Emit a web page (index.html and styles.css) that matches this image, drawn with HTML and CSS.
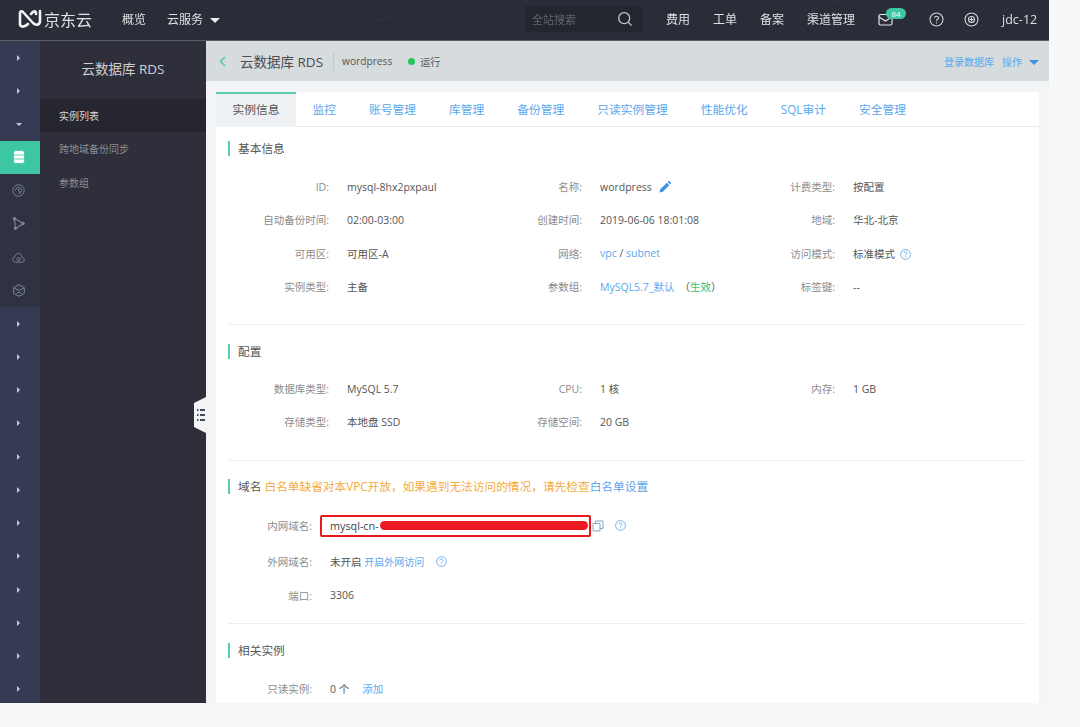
FILE: index.html
```html
<!DOCTYPE html>
<html lang="zh-CN">
<head>
    <meta name="viewport" content="width=device-width, initial-scale=1.0" />
    <title>云数据库 RDS</title>
    <link rel="stylesheet" href="styles.css">
</head>
<body>
    <div class="app">
        <!-- top bar -->
        <header class="topbar">
            <svg class="topbar-lines" width="1049" height="40" viewBox="0 0 1049 40" fill="none" stroke="#3a3c4a" stroke-width="1">
                <path d="M40 40C70 20 90 10 110 0" />
                <path d="M100 40C120 30 130 15 128 0" />
                <path d="M270 40C300 25 320 10 345 0" />
                <path d="M330 40C345 20 400 25 410 0" />
                <path d="M440 0C470 15 480 30 500 40" />
                <path d="M640 40C660 25 680 15 705 0" />
                <path d="M760 40C790 25 810 10 840 0" />
                <path d="M860 0C880 10 885 30 900 40" />
                <path d="M960 40C980 25 1000 15 1020 0" />
            </svg>
            <a class="logo">
                <svg width="25" height="20" viewBox="0 0 25 20" fill="none" stroke="#f2f2f2" stroke-width="2.6" stroke-linejoin="round" stroke-linecap="round">
                    <path d="M2 15V4C2 2 4 2 5 3L15 14C18 17 22 16 22 12V2" />
                    <path d="M2 15C2 19 7 18 10 15" />
                    <path d="M13 5C15 2 18 1 18 5" />
                </svg>
                <span>京东云</span>
            </a>
            <nav class="topnav">
                <a>概览</a>
                <a>云服务<i class="caret caret-white"></i></a>
            </nav>
            <div class="search">
                <span>全站搜索</span>
                <svg width="16" height="16" viewBox="0 0 16 16" fill="none" stroke="#c4c6cc" stroke-width="1.3">
                    <circle cx="7.2" cy="7.2" r="5.5" />
                    <path d="M11.2 11.2L14.6 14.6" />
                </svg>
            </div>
            <div class="toplinks">
                <a>费用</a>
                <a>工单</a>
                <a>备案</a>
                <a>渠道管理</a>
            </div>
            <div class="topicons">
                <span class="mail">
                    <svg width="15" height="13" viewBox="0 0 15 13" fill="none" stroke="#e6e7ea" stroke-width="1.2">
                        <rect x="1" y="1.5" width="13" height="10.5" rx="1.5" />
                        <path d="M1 4L7.5 8L14 4" />
                    </svg>
                    <b class="badge">84</b>
                </span>
                <svg class="help" width="15" height="15" viewBox="0 0 15 15" fill="none" stroke="#d5d6da" stroke-width="1.1">
                    <circle cx="7.5" cy="7.5" r="6.5" />
                    <path d="M5.6 6C5.6 3.6 9.5 3.6 9.5 5.9C9.5 7.4 7.5 7.2 7.5 9" />
                    <path d="M7.5 10.2V11.4" />
                </svg>
                <svg class="globe" width="15" height="15" viewBox="0 0 15 15" fill="none" stroke="#d5d6da" stroke-width="1.1">
                    <circle cx="7.5" cy="7.5" r="6.5" />
                    <circle cx="7.5" cy="7.5" r="3" />
                    <path d="M7.5 5.5V9.5M5.5 7.5H9.5" />
                </svg>
            </div>
            <span class="user">jdc-12</span>
        </header>

        <div class="body">
            <!-- icon rail -->
            <aside class="rail">
                <div class="rail-item"><i class="arrow"></i></div>
                <div class="rail-item"><i class="arrow"></i></div>
                <div class="rail-item"><i class="arrow-down"></i></div>
                <div class="rail-item active">
                    <svg width="12" height="14" viewBox="0 0 12 14" fill="#fff" stroke="#3cc7a2" stroke-width=".8">
                        <rect x=".5" y=".5" width="11" height="13" rx="2.5" />
                        <path d="M.5 5H11.5M.5 9H11.5" />
                    </svg>
                </div>
                <div class="rail-group">
                    <div class="rail-item">
                        <svg width="13" height="13" viewBox="0 0 13 13" fill="none" stroke="#7d849c" stroke-width="1">
                            <circle cx="6.5" cy="6.5" r="5.7" />
                            <path d="M3.5 6.5A3 3 0 1 1 6.5 9.5" />
                            <path d="M6.5 5V6.8L8 7.6" />
                        </svg>
                    </div>
                    <div class="rail-item">
                        <svg width="13" height="13" viewBox="0 0 13 13" fill="none" stroke="#7d849c" stroke-width="1.1">
                            <path d="M2.5 1.5L11.5 6.5L3.5 11.5Z" />
                            <circle cx="2.5" cy="1.8" r="1.2" fill="#7d849c" />
                            <circle cx="3.5" cy="11.2" r="1.2" fill="#7d849c" />
                            <circle cx="11" cy="6.5" r="1.2" fill="#7d849c" />
                        </svg>
                    </div>
                    <div class="rail-item">
                        <svg width="13" height="11" viewBox="0 0 13 11" fill="none" stroke="#7d849c" stroke-width="1">
                            <path d="M3.5 10.2H10C13 10 13 5.8 10 5.5C9.5 .2 3.8 .2 3 4.6C-.3 5.2 .2 10.2 3.5 10.2Z" />
                            <circle cx="6.5" cy="7.2" r="1.6" />
                        </svg>
                    </div>
                    <div class="rail-item">
                        <svg width="12" height="13" viewBox="0 0 12 13" fill="none" stroke="#7d849c" stroke-width="1">
                            <path d="M6 .7L11.3 3.6V9.4L6 12.3L.7 9.4V3.6Z" />
                            <path d="M.9 3.8L6 6.5L11.1 3.8M3.5 9.5C4.5 8 7.5 8 8.5 9.5" />
                        </svg>
                    </div>
                </div>
                <div class="rail-item"><i class="arrow"></i></div>
                <div class="rail-item"><i class="arrow"></i></div>
                <div class="rail-item"><i class="arrow"></i></div>
                <div class="rail-item"><i class="arrow"></i></div>
                <div class="rail-item"><i class="arrow"></i></div>
                <div class="rail-item"><i class="arrow"></i></div>
                <div class="rail-item"><i class="arrow"></i></div>
                <div class="rail-item"><i class="arrow"></i></div>
                <div class="rail-item"><i class="arrow"></i></div>
                <div class="rail-item"><i class="arrow"></i></div>
                <div class="rail-item"><i class="arrow"></i></div>
                <div class="rail-item"><i class="arrow"></i></div>
            </aside>

            <!-- second level menu -->
            <aside class="subnav">
                <h2>云数据库 RDS</h2>
                <a class="subnav-item current">实例列表</a>
                <a class="subnav-item">跨地域备份同步</a>
                <a class="subnav-item">参数组</a>
                <svg class="collapse" width="12" height="36" viewBox="0 0 12 36">
                    <path d="M12 0V36L0 30V6Z" fill="#f4f5f7" />
                    <path d="M3 13H4.5M6 13H11M3 18H4.5M6 18H11M3 23H4.5M6 23H11" stroke="#434a5e" stroke-width="2" />
                </svg>
            </aside>

            <main class="main">
                <div class="pagehead">
                    <svg class="back" width="7" height="11" viewBox="0 0 7 11" fill="none" stroke="#5ccbad" stroke-width="1.6">
                        <path d="M6 1L1.5 5.5L6 10" />
                    </svg>
                    <h1>云数据库 RDS</h1>
                    <span class="instance">wordpress</span>
                    <span class="state"><i></i>运行</span>
                    <span class="pagehead-actions">
                        <a>登录数据库</a>
                        <a>操作<i class="caret caret-blue"></i></a>
                    </span>
                </div>

                <div class="card">
                    <div class="tabs">
                        <a class="tab selected">实例信息</a>
                        <a class="tab">监控</a>
                        <a class="tab">账号管理</a>
                        <a class="tab">库管理</a>
                        <a class="tab">备份管理</a>
                        <a class="tab">只读实例管理</a>
                        <a class="tab">性能优化</a>
                        <a class="tab">SQL审计</a>
                        <a class="tab">安全管理</a>
                    </div>

                    <section class="section basic">
                        <h3 class="section-title">基本信息</h3>
                        <div class="fields">
                            <div class="field"><label>ID:</label><span>mysql-8hx2pxpaul</span></div>
                            <div class="field"><label>名称:</label><span>wordpress
                                <svg class="pencil" width="12" height="12" viewBox="0 0 12 12"><path d="M0.5 11.5L1.3 8.2L7.8 1.7L10.3 4.2L3.8 10.7ZM8.6 .9L9.3 .3C9.7 0 10.2 0 10.6 .3L11.7 1.4C12 1.8 12 2.3 11.7 2.7L11.1 3.4Z" fill="#3f94e0" /></svg>
                            </span></div>
                            <div class="field"><label>计费类型:</label><span>按配置</span></div>
                            <div class="field"><label>自动备份时间:</label><span>02:00-03:00</span></div>
                            <div class="field"><label>创建时间:</label><span>2019-06-06 18:01:08</span></div>
                            <div class="field"><label>地域:</label><span>华北-北京</span></div>
                            <div class="field"><label>可用区:</label><span>可用区-A</span></div>
                            <div class="field"><label>网络:</label><span><a>vpc</a> / <a>subnet</a></span></div>
                            <div class="field"><label>访问模式:</label><span>标准模式
                                <svg class="tip" width="11" height="11" viewBox="0 0 11 11" fill="none" stroke="#6aa9e4" stroke-width=".9"><circle cx="5.5" cy="5.5" r="4.9" /><path d="M4 4.2C4 2.5 7 2.5 7 4.2C7 5.3 5.5 5.2 5.5 6.6M5.5 7.4V8.4" /></svg>
                            </span></div>
                            <div class="field"><label>实例类型:</label><span>主备</span></div>
                            <div class="field"><label>参数组:</label><span><a>MySQL5.7_默认</a><em class="effect">（<b>生效</b>）</em></span></div>
                            <div class="field"><label>标签键:</label><span>--</span></div>
                        </div>
                    </section>

                    <section class="section config">
                        <h3 class="section-title">配置</h3>
                        <div class="fields">
                            <div class="field"><label>数据库类型:</label><span>MySQL 5.7</span></div>
                            <div class="field"><label>CPU:</label><span>1 核</span></div>
                            <div class="field"><label>内存:</label><span>1 GB</span></div>
                            <div class="field"><label>存储类型:</label><span>本地盘 SSD</span></div>
                            <div class="field"><label>存储空间:</label><span>20 GB</span></div>
                        </div>
                    </section>

                    <section class="section domain">
                        <h3 class="section-title">域名 <span class="warn">白名单缺省对本VPC开放，如果遇到无法访问的情况，请先检查</span><a>白名单设置</a></h3>
                        <div class="list">
                            <div class="field inner">
                                <label>内网域名:</label>
                                <span class="boxed">mysql-cn-<i class="scribble"></i></span>
                                <svg class="copy" width="12" height="12" viewBox="0 0 12 12" fill="none" stroke="#7fa6c9" stroke-width="1"><path d="M1 3.5H8V11H1ZM3.5 3.5V1H11V8.5H8" /></svg>
                                <svg class="tip" width="11" height="11" viewBox="0 0 11 11" fill="none" stroke="#6aa9e4" stroke-width=".9"><circle cx="5.5" cy="5.5" r="4.9" /><path d="M4 4.2C4 2.5 7 2.5 7 4.2C7 5.3 5.5 5.2 5.5 6.6M5.5 7.4V8.4" /></svg>
                            </div>
                            <div class="field">
                                <label>外网域名:</label>
                                <span>未开启 <a class="open-link">开启外网访问</a></span>
                                <svg class="tip" width="11" height="11" viewBox="0 0 11 11" fill="none" stroke="#6aa9e4" stroke-width=".9"><circle cx="5.5" cy="5.5" r="4.9" /><path d="M4 4.2C4 2.5 7 2.5 7 4.2C7 5.3 5.5 5.2 5.5 6.6M5.5 7.4V8.4" /></svg>
                            </div>
                            <div class="field"><label>端口:</label><span>3306</span></div>
                        </div>
                    </section>

                    <section class="section related">
                        <h3 class="section-title">相关实例</h3>
                        <div class="list">
                            <div class="field"><label>只读实例:</label><span>0 个</span><a class="add">添加</a></div>
                        </div>
                    </section>
                </div>
            </main>
        </div>
    </div>
</body>
</html>
```

FILE: styles.css
```css
html, body {
    height: 100%;
    overflow: hidden;
}
body {
    margin: 0;
    background-color: #f7f8fa;
    font-family: "Open Sans", "Noto Sans CJK SC", sans-serif;
    font-size: 10.5px;
    color: #555;
}
a {
    color: #5aa8ee;
    text-decoration: none;
}
h1, h2, h3 {
    margin: 0;
    font-weight: normal;
}
.app {
    width: 1049px;
    height: 703px;
    display: flex;
    flex-direction: column;
    overflow: hidden;
    filter: blur(0.45px);
}

/* top bar */
.topbar {
    position: relative;
    flex: none;
    height: 41px;
    box-sizing: border-box;
    padding-bottom: 2px;
    display: flex;
    align-items: center;
    background-color: #2a2c38;
    border-bottom: 1px solid #5b5e69;
    color: #dfe0e3;
    font-size: 12px;
}
.topbar-lines {
    position: absolute;
    left: 0;
    top: 0;
    opacity: 0.5;
}
.topbar > *:not(.topbar-lines) {
    position: relative;
}
.topbar a {
    color: #dfe0e3;
}
.logo {
    display: flex;
    align-items: center;
    margin-left: 18px;
    width: 104px;
    font-size: 16px;
}
.logo span {
    margin-left: 1px;
}
.topnav {
    display: flex;
    gap: 21px;
    width: 403px;
}
.caret {
    display: inline-block;
    width: 0;
    height: 0;
    border-left: 5px solid transparent;
    border-right: 5px solid transparent;
    vertical-align: middle;
}
.caret-white {
    border-top: 5px solid #eee;
    margin-left: 7px;
}
.caret-blue {
    border-top: 5px solid #3f94e0;
    margin-left: 7px;
}
.search {
    width: 117px;
    height: 26px;
    box-sizing: border-box;
    padding: 0 9px 0 7px;
    display: flex;
    align-items: center;
    justify-content: space-between;
    background-color: #23252f;
    font-size: 11px;
    color: #62646e;
}
.toplinks {
    display: flex;
    gap: 23px;
    margin-left: 24px;
}
.topicons {
    display: flex;
    align-items: center;
    margin-left: 23px;
}
.mail {
    position: relative;
    display: flex;
}
.badge {
    position: absolute;
    left: 8px;
    top: -5px;
    width: 20px;
    height: 11px;
    border-radius: 5.5px;
    background-color: #3cc7a2;
    color: #fff;
    font-size: 8px;
    font-weight: normal;
    line-height: 11px;
    text-align: center;
}
.help {
    margin-left: 36px;
}
.globe {
    margin-left: 20px;
}
.user {
    margin-left: 23px;
    font-size: 12.5px;
}

.body {
    flex: 1;
    display: flex;
    min-height: 0;
}

/* icon rail */
.rail {
    flex: none;
    width: 40px;
    background-color: #343b52;
}
.rail-item {
    height: 33.25px;
    padding-right: 3px;
    display: flex;
    align-items: center;
    justify-content: center;
}
.rail-item.active {
    background-color: #3cc7a2;
}
.rail-group {
    background-color: #2f3241;
}
.arrow {
    width: 0;
    height: 0;
    border-top: 3px solid transparent;
    border-bottom: 3px solid transparent;
    border-left: 3.5px solid #c5c8d2;
}
.arrow-down {
    width: 0;
    height: 0;
    border-left: 3px solid transparent;
    border-right: 3px solid transparent;
    border-top: 3.5px solid #c5c8d2;
}

/* second level menu */
.subnav {
    position: relative;
    flex: none;
    width: 166px;
    background-color: #2e2f3a;
}
.subnav h2 {
    height: 58px;
    box-sizing: border-box;
    padding-top: 17px;
    text-align: center;
    font-size: 13.5px;
    color: #cfd0d4;
}
.subnav-item {
    display: block;
    height: 33.3px;
    padding-left: 19px;
    font-size: 10px;
    line-height: 34px;
    color: #8a8c97;
}
.subnav-item.current {
    background-color: #25262f;
    color: #d8d8dc;
}
.collapse {
    position: absolute;
    right: 0;
    top: 356px;
}

/* main */
.main {
    flex: 1;
    min-width: 0;
    background-color: #f3f4f6;
}
.pagehead {
    height: 40px;
    display: flex;
    align-items: center;
    padding: 0 10px 0 13px;
    background-color: #d6dbde;
}
.back {
    margin-right: 14px;
}
.pagehead h1 {
    font-size: 13.5px;
    color: #4a4d52;
}
.instance {
    margin-left: 10px;
    padding-left: 8px;
    border-left: 1px solid #c3c7cb;
    line-height: 19px;
    font-size: 10.2px;
}
.state {
    display: flex;
    align-items: center;
    margin-left: 16px;
    font-size: 10px;
}
.state i {
    width: 7px;
    height: 7px;
    border-radius: 50%;
    margin-right: 5px;
    background-color: #27c45f;
}
.pagehead-actions {
    margin-left: auto;
    display: flex;
    gap: 8px;
    font-size: 10px;
}
.card {
    margin: 11px 10px 0;
    height: 700px;
    background-color: #fff;
}
.tabs {
    height: 35px;
    box-sizing: border-box;
    display: flex;
    border-bottom: 1px solid #e8eaed;
    font-size: 11.75px;
}
.tab {
    padding: 0 16.5px;
    line-height: 35px;
}
.tab.selected {
    box-sizing: border-box;
    height: 35px;
    line-height: 31px;
    border-top: 2px solid #5ccbad;
    background-color: #eef1f4;
    color: #555;
}

/* sections */
.section {
    margin: 0 13px 0 12px;
    border-bottom: 1px solid #eee;
    box-sizing: border-box;
}
.section-title {
    height: 15px;
    padding-left: 8px;
    border-left: 2px solid #5ccbad;
    font-size: 11.7px;
    line-height: 15px;
    color: #555;
}
.basic {
    height: 198px;
    padding-top: 14px;
}
.config {
    height: 136px;
    padding-top: 19px;
}
.domain {
    height: 163px;
    padding-top: 18px;
}
.related {
    padding-top: 19px;
    border: 0;
}
.fields {
    display: grid;
    grid-template-columns: repeat(3, 253px);
    grid-auto-rows: 33.3px;
    margin: 14px 0 0 -12px;
}
.config .fields {
    margin-top: 13px;
}
.field {
    display: flex;
    align-items: center;
    color: #555;
}
.field label {
    flex: none;
    width: 113px;
    margin-right: 18px;
    text-align: right;
    color: #8c8c8c;
}
.list {
    margin: 14px 0 0 -12px;
}
.domain .list {
    margin-top: 15px;
}
.list .field {
    height: 33.3px;
}
.list .field.inner {
    margin-bottom: 3px;
}
.list .field label {
    width: 96px;
}
.warn {
    color: #f4ab3c;
}
.open-link {
    font-size: 10px;
}
.pencil {
    margin-left: 4px;
    vertical-align: -2px;
}
.tip {
    vertical-align: -2px;
    margin-left: 2px;
}
.effect {
    margin-left: 5px;
    font-style: normal;
}
.effect b {
    font-weight: normal;
    color: #2ec46a;
}
.boxed {
    display: flex;
    align-items: center;
    width: 271px;
    height: 22px;
    box-sizing: border-box;
    margin-left: -10px;
    padding-left: 8px;
    border: 2.5px solid #e8181d;
    border-radius: 2px;
    color: #444;
    font-size: 10.8px;
}
.scribble {
    width: 208px;
    height: 9px;
    margin-left: 1px;
    border-radius: 4.5px;
    background-color: #ee1a22;
}
.copy {
    margin-left: 1px;
}
.list .field > span + .tip {
    margin-left: 12px;
}
.list .field > .copy + .tip {
    margin-left: 11px;
}
.add {
    margin-left: 13px;
}
```
